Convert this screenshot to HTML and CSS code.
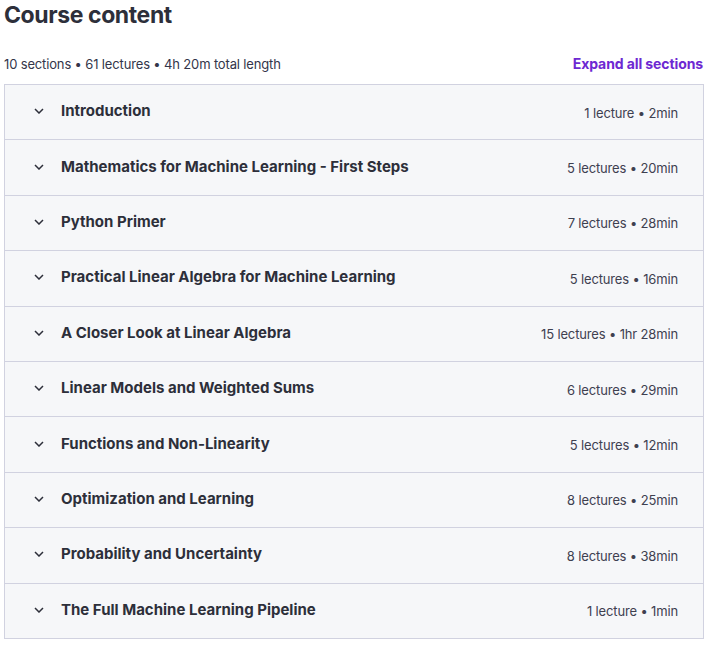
FILE: index.html
```html
<!DOCTYPE html>
<html>
<head>
<meta charset="utf-8">
<link rel="stylesheet" href="styles.css">
</head>
<body>
<div class="page">
  <h2 class="title">Course content</h2>
  <div class="summary">
    <span class="stats">10 sections • 61 lectures • 4h 20m total length</span>
    <span class="expand">Expand all sections</span>
  </div>
  <div class="sections">
    <div class="row"><span class="chev"><svg width="10" height="6" viewBox="0 0 10 6"><path d="M1 1l4 4 4-4" fill="none" stroke="currentColor" stroke-width="1.5"/></svg></span><span class="name">Introduction</span><span class="meta">1 lecture • 2min</span></div>
    <div class="row"><span class="chev"><svg width="10" height="6" viewBox="0 0 10 6"><path d="M1 1l4 4 4-4" fill="none" stroke="currentColor" stroke-width="1.5"/></svg></span><span class="name">Mathematics for Machine Learning - First Steps</span><span class="meta">5 lectures • 20min</span></div>
    <div class="row"><span class="chev"><svg width="10" height="6" viewBox="0 0 10 6"><path d="M1 1l4 4 4-4" fill="none" stroke="currentColor" stroke-width="1.5"/></svg></span><span class="name">Python Primer</span><span class="meta">7 lectures • 28min</span></div>
    <div class="row"><span class="chev"><svg width="10" height="6" viewBox="0 0 10 6"><path d="M1 1l4 4 4-4" fill="none" stroke="currentColor" stroke-width="1.5"/></svg></span><span class="name">Practical Linear Algebra for Machine Learning</span><span class="meta">5 lectures • 16min</span></div>
    <div class="row"><span class="chev"><svg width="10" height="6" viewBox="0 0 10 6"><path d="M1 1l4 4 4-4" fill="none" stroke="currentColor" stroke-width="1.5"/></svg></span><span class="name">A Closer Look at Linear Algebra</span><span class="meta">15 lectures • 1hr 28min</span></div>
    <div class="row"><span class="chev"><svg width="10" height="6" viewBox="0 0 10 6"><path d="M1 1l4 4 4-4" fill="none" stroke="currentColor" stroke-width="1.5"/></svg></span><span class="name">Linear Models and Weighted Sums</span><span class="meta">6 lectures • 29min</span></div>
    <div class="row"><span class="chev"><svg width="10" height="6" viewBox="0 0 10 6"><path d="M1 1l4 4 4-4" fill="none" stroke="currentColor" stroke-width="1.5"/></svg></span><span class="name">Functions and Non-Linearity</span><span class="meta">5 lectures • 12min</span></div>
    <div class="row"><span class="chev"><svg width="10" height="6" viewBox="0 0 10 6"><path d="M1 1l4 4 4-4" fill="none" stroke="currentColor" stroke-width="1.5"/></svg></span><span class="name">Optimization and Learning</span><span class="meta">8 lectures • 25min</span></div>
    <div class="row"><span class="chev"><svg width="10" height="6" viewBox="0 0 10 6"><path d="M1 1l4 4 4-4" fill="none" stroke="currentColor" stroke-width="1.5"/></svg></span><span class="name">Probability and Uncertainty</span><span class="meta">8 lectures • 38min</span></div>
    <div class="row"><span class="chev"><svg width="10" height="6" viewBox="0 0 10 6"><path d="M1 1l4 4 4-4" fill="none" stroke="currentColor" stroke-width="1.5"/></svg></span><span class="name">The Full Machine Learning Pipeline</span><span class="meta">1 lecture • 1min</span></div>
  </div>
</div>
</body>
</html>
```

FILE: styles.css
```css
* { box-sizing: border-box; }
body {
  margin: 0;
  background: #fff;
  font-family: Inter, "Noto Sans", sans-serif;
  color: #2d2f3a;
}
.page {
  padding: 0 6px 0 4px;
}
.title {
  margin: 0;
  font-size: 23px;
  font-weight: 700;
  line-height: 30px;
  letter-spacing: -0.4px;
  color: #2d2f3a;
}
.summary {
  display: flex;
  justify-content: space-between;
  align-items: center;
  margin-top: 19px;
  height: 30px;
  padding-bottom: 1px;
}
.stats {
  font-size: 13px;
  letter-spacing: -0.15px;
  color: #33354a;
}
.expand {
  font-size: 14px;
  font-weight: 700;
  letter-spacing: -0.1px;
  color: #6d28d2;
  margin-right: 1px;
}
.sections {
  margin-top: 5px;
  border: 1px solid #d1d2e0;
  background: #f6f7f9;
}
.row {
  display: flex;
  align-items: center;
  height: 55.4px;
  padding: 0 25px 0 29px;
  border-bottom: 1px solid #d1d2e0;
}
.row:last-child { border-bottom: none; height: 54.4px; }
.chev {
  display: flex;
  width: 27px;
  color: #2d2f3a;
  margin-top: -2px;
}
.name {
  flex: 1;
  font-size: 15px;
  font-weight: 700;
  margin-top: -3px;
}
.meta {
  font-size: 13px;
  letter-spacing: -0.15px;
  color: #3e4050;
  margin-top: 1px;
}
```
